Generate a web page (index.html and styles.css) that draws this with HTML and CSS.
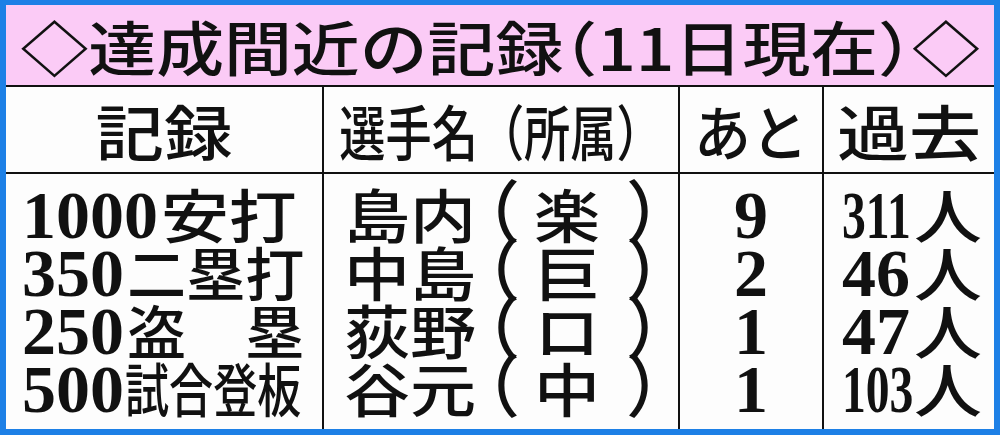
FILE: index.html
```html
<!DOCTYPE html>
<html lang="ja">
<head>
<meta charset="utf-8">
<link rel="stylesheet" href="styles.css">
</head>
<body>
<div class="frame">
  <div class="title"><span class="title-text">◇達成間近の記録<span class="p">（</span>11日現在<span class="p">）</span>◇</span></div>
  <div class="head">
    <div class="hc c1"><span class="h-wide">記録</span></div>
    <div class="hc c2"><span class="h-narrow">選手名（所属）</span></div>
    <div class="hc c3"><span class="h-kana">あと</span></div>
    <div class="hc c4"><span class="h-wide2">過去</span></div>
  </div>
  <div class="body">
    <div class="bc b1">
      <div class="line"><span class="dg">1000</span><span class="k k2">安打</span></div>
      <div class="line"><span class="dg">350</span><span class="k k3">二塁打</span></div>
      <div class="line"><span class="dg">250</span><span class="k k3">盗　塁</span></div>
      <div class="line"><span class="dg">500</span><span class="k k4">試合登板</span></div>
    </div>
    <div class="bc b2">
      <div class="line"><span class="k name">島内</span><span class="po">（</span><span class="k club">楽</span><span class="pc">）</span></div>
      <div class="line"><span class="k name">中島</span><span class="po">（</span><span class="k club">巨</span><span class="pc">）</span></div>
      <div class="line"><span class="k name">荻野</span><span class="po">（</span><span class="k club">ロ</span><span class="pc">）</span></div>
      <div class="line"><span class="k name">谷元</span><span class="po">（</span><span class="k club">中</span><span class="pc">）</span></div>
    </div>
    <div class="bc b3">
      <div class="line center"><span class="dg">9</span></div>
      <div class="line center"><span class="dg">2</span></div>
      <div class="line center"><span class="dg">1</span></div>
      <div class="line center"><span class="dg">1</span></div>
    </div>
    <div class="bc b4">
      <div class="line"><span class="num dg"><span class="sq-num">311</span></span><span class="k nin">人</span></div>
      <div class="line"><span class="num dg">46</span><span class="k nin">人</span></div>
      <div class="line"><span class="num dg">47</span><span class="k nin">人</span></div>
      <div class="line"><span class="num dg"><span class="sq-num">103</span></span><span class="k nin">人</span></div>
    </div>
  </div>
</div>
</body>
</html>
```

FILE: styles.css
```css
* { box-sizing: border-box; }
html, body { margin: 0; padding: 0; }
body { width: 1000px; height: 435px; overflow: hidden; background: #1d80e6; }

.frame {
  width: 1000px;
  height: 435px;
  border-style: solid;
  border-color: #1d80e6;
  border-width: 5px 6px 6px 6px;
  background: #fdfdfd;
  display: flex;
  flex-direction: column;
  color: #111;
}

.title {
  height: 82px;
  background: #fbcbf6;
  border-bottom: 2px solid #111;
  display: flex;
  align-items: center;
  justify-content: center;
  font-family: "Noto Sans CJK JP", sans-serif;
  font-weight: 500;
  font-size: 59px;
  line-height: 1;
  white-space: nowrap;
}
.title-text {
  display: inline-block;
  transform: scaleX(1.15);
}
.title .p { font-feature-settings: "halt"; }

.head, .body {
  display: grid;
  grid-template-columns: 316px 356px 144px 1fr;
}
.head {
  height: 87px;
  border-bottom: 2px solid #111;
  font-family: "Noto Sans CJK JP", sans-serif;
  font-weight: 500;
  font-size: 60px;
  line-height: 1;
}
.hc {
  display: flex;
  align-items: center;
  justify-content: center;
  white-space: nowrap;
}
.c2, .c3, .c4, .b2, .b3, .b4 { border-left: 2px solid #111; }
.h-wide { display: inline-block; transform: scaleX(1.14); }
.h-wide2 { display: inline-block; transform: scaleX(1.2); }
.h-narrow { display: inline-block; transform: scaleX(0.77); }
.h-kana { display: inline-block; transform: scaleX(0.95); }

.body {
  flex: 1;
  font-family: "Liberation Serif", "Noto Sans CJK JP", serif;
  font-weight: 500;
  font-size: 68px;
}
.dg { font-weight: 700; }
.bc {
  padding-top: 12px;
  display: flex;
  flex-direction: column;
}
.line {
  height: 58px;
  line-height: 58px;
  white-space: nowrap;
  display: flex;
  align-items: baseline;
}
.line.center { justify-content: center; }

.k {
  display: inline-block;
  font-size: 58px;
  transform-origin: left center;
}
.b1 { padding-left: 16px; }
.k2 { transform: scaleX(1.17); margin-left: 3px; margin-right: 20px; }
.k3 { transform: scaleX(1.02); margin-left: 3px; margin-right: 4px; }
.k4 { transform: scaleX(0.76); margin-left: 1px; margin-right: -56px; }

.b2 { padding-left: 20px; }
.name { transform: scaleX(1.14); margin-right: 26px; }
.po { font-feature-settings: "halt"; }
.club { transform: scaleX(1.14); margin-left: 14px; margin-right: 34px; }
.pc { font-feature-settings: "halt"; }

.b4 { padding-left: 18px; }
.num { display: inline-block; width: 72px; }
.sq-num { display: inline-block; transform: scaleX(0.7); transform-origin: left center; }
.nin { transform: scaleX(1.17); }
```
